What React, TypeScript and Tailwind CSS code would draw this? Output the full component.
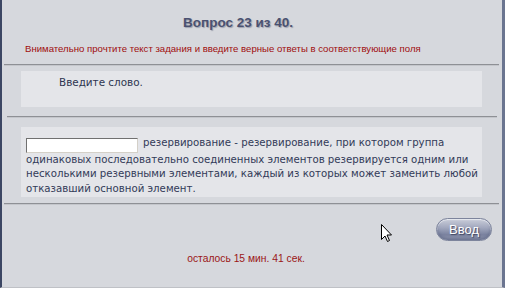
export default function App() {
  return (
    <div className="relative w-[505px] h-[288px] overflow-hidden bg-[#d6d8dd] border-l-2 border-l-[#3c4663] border-r-[3px] border-r-[#6b7590] border-b border-b-[#bfc1c6]">
      <div className="pt-[14px] pr-[28px] text-center font-['Liberation_Sans',Arial,sans-serif] font-bold text-[13.5px] leading-[18px] text-[#4a5170] [text-shadow:1px_1px_1px_#9ca0ad]">
        Вопрос 23 из 40.
      </div>

      <p className="mt-[11px] ml-[23px] font-['Liberation_Sans',Arial,sans-serif] text-[9.6px] leading-[12px] text-[#a00d0d]">
        Внимательно прочтите текст задания и введите верные ответы в соответствующие поля
      </p>

      <div className="mt-[9px] ml-[2px] mr-[3px] h-[2px] border-t border-t-[#8e9095] border-b border-b-[#c4c6cb]" />

      <div className="mt-[5px] ml-[19px] mr-[20px] h-[36px] bg-[#e4e5e9] pl-[38px] pt-[4px]">
        <p className="font-['DejaVu_Sans',Verdana,sans-serif] text-[10.4px] leading-[14px] text-[#2e3550]">
          Введите слово.
        </p>
      </div>

      <div className="mt-[9px] ml-[5px] mr-[5px] h-[2px] border-t border-t-[#8e9095] border-b border-b-[#c4c6cb]" />

      <div className="mt-[9px] ml-[19px] mr-[20px] h-[70px] bg-[#e4e5e9] pl-[5px] pr-[4px] pt-[9px]">
        <p className="font-['DejaVu_Sans',Verdana,sans-serif] text-[10.2px] leading-[14.3px] text-[#323a58]">
          <input
            type="text"
            className="mr-[5px] inline-block w-[112px] h-[15px] align-[-3px] bg-white border border-t-[#707070] border-l-[#707070] border-b-[#d4d0c8] border-r-[#d4d0c8] outline-none"
          />
          резервирование - резервирование, при котором группа одинаковых последовательно соединенных
          элементов резервируется одним или несколькими резервными элементами, каждый из которых может
          заменить любой отказавший основной элемент.
        </p>
      </div>

      <div className="mt-[6px] ml-[2px] mr-[3px] h-[2px] border-t border-t-[#8e9095] border-b border-b-[#c4c6cb]" />

      <div className="flex justify-end mt-[13px] mr-[10px]">
        <button className="w-[56px] h-[23px] rounded-full border border-[#7d849c] bg-[linear-gradient(to_bottom,#c9cdd9_0%,#a3a9bf_40%,#7a829f_75%,#9aa0b6_100%)] shadow-[inset_0_1px_1px_#e8eaf0,inset_0_-2px_3px_#6a7290] font-['Liberation_Sans',Arial,sans-serif] text-[13px] leading-[19px] text-white [text-shadow:1px_1px_1px_#3e4560]">
          Ввод
        </button>
      </div>

      <p className="mt-[12px] text-center pr-[12px] font-['Liberation_Sans',Arial,sans-serif] text-[10.3px] leading-[12px] text-[#9b1616]">
        осталось 15 мин. 41 сек.
      </p>

      <svg className="absolute left-[379px] top-[224px]" width="12" height="19" viewBox="0 0 12 19">
        <path d="M0.5 0.5 L0.5 15.5 L4 12 L6.5 17.5 L8.5 16.5 L6 11 L10.5 11 Z" fill="#ffffff" stroke="#000000" strokeWidth="1" strokeLinejoin="miter" />
      </svg>
    </div>
  );
}
